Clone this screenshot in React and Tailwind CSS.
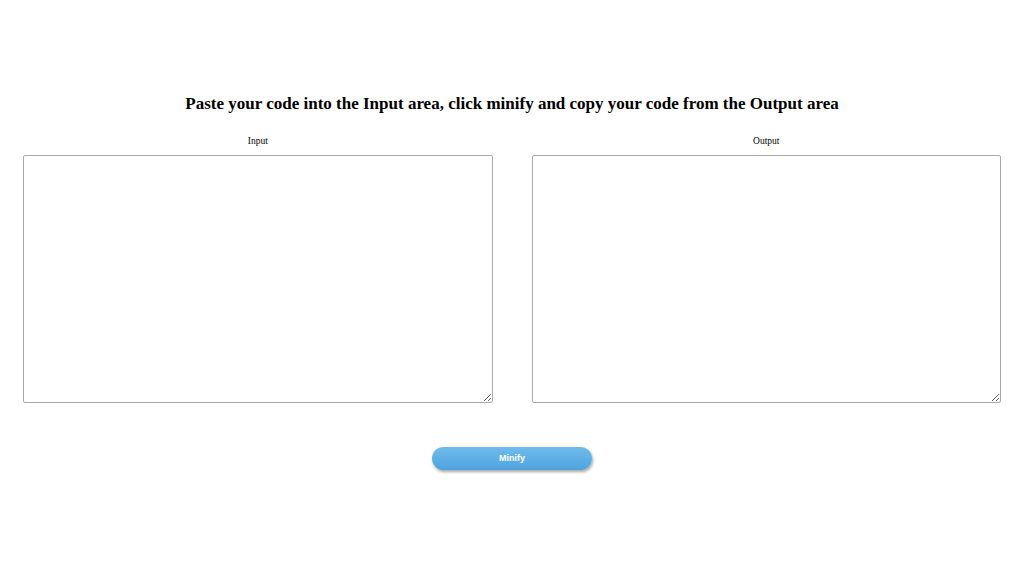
export default function App() {
  return (
    <div className="w-[1024px] h-[575px] bg-white font-['Liberation_Serif',serif] text-black">
      <div className="pt-[93px] px-[23px]">
        <h1 className="text-center text-[17px] leading-[22px] font-bold">
          Paste your code into the Input area, click minify and copy your code from the Output area
        </h1>
        <div className="mt-[20px] flex gap-[39px]">
          <div className="flex-1 flex flex-col items-center">
            <label className="text-[9.5px] leading-[12px]">Input</label>
            <textarea className="mt-[8px] w-full h-[248px] border border-[#a9a9a9] rounded-[2px] bg-white outline-none" />
          </div>
          <div className="flex-1 flex flex-col items-center">
            <label className="text-[9.5px] leading-[12px]">Output</label>
            <textarea className="mt-[8px] w-full h-[248px] border border-[#a9a9a9] rounded-[2px] bg-white outline-none" />
          </div>
        </div>
        <div className="mt-[44px] flex justify-center">
          <button className="w-[160px] h-[23px] rounded-full bg-gradient-to-b from-[#6fbcec] to-[#4ea3de] text-white font-['Liberation_Sans',sans-serif] font-bold text-[9px] shadow-[1px_2px_3px_rgba(0,0,0,0.35)]">
            Minify
          </button>
        </div>
      </div>
    </div>
  );
}
